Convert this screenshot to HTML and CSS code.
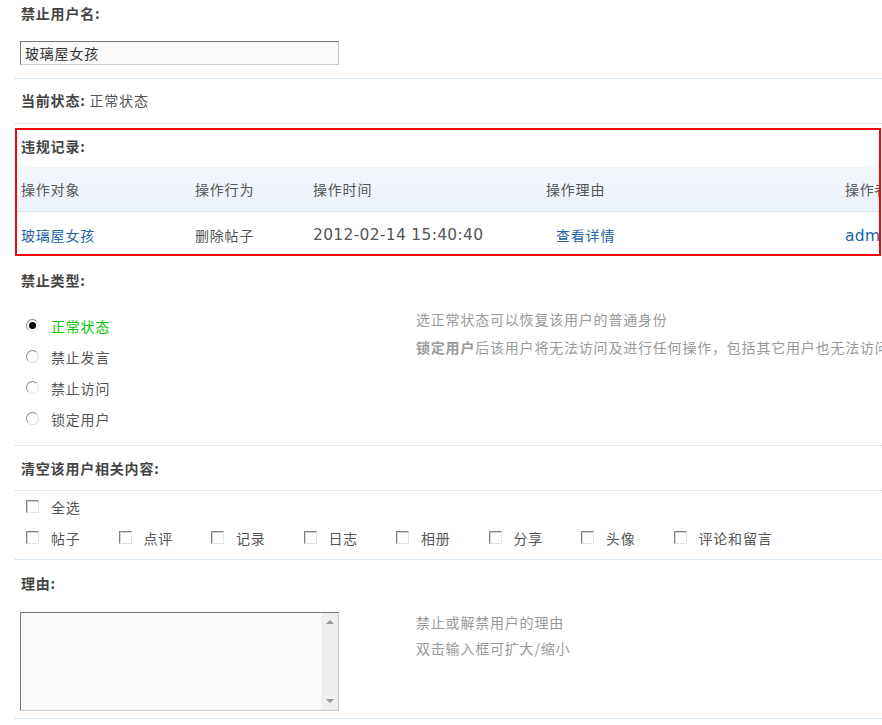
FILE: index.html
```html
<!DOCTYPE html>
<html lang="zh-CN">
<head>
<meta charset="utf-8">
<title>禁止用户</title>
<link rel="stylesheet" href="styles.css">
</head>
<body>
<div class="page">
  <div class="sec sec-name">
    <div class="head">禁止用户名:</div>
    <input class="txt" type="text" value="玻璃屋女孩">
  </div>

  <div class="sec sec-status">
    <span class="label">当前状态:</span> 正常状态
  </div>

  <div class="record">
    <div class="rec-head">违规记录:</div>
    <div class="rec-table">
      <div class="rec-row rec-th">
        <div class="c c1">操作对象</div>
        <div class="c c2">操作行为</div>
        <div class="c c3">操作时间</div>
        <div class="c c4">操作理由</div>
        <div class="c c5">操作者</div>
      </div>
      <div class="rec-row rec-td">
        <div class="c c1"><a href="#" class="lnk">玻璃屋女孩</a></div>
        <div class="c c2">删除帖子</div>
        <div class="c c3 date">2012-02-14 15:40:40</div>
        <div class="c c4 detail"><a href="#" class="lnk">查看详情</a></div>
        <div class="c c5"><a href="#" class="lnk latin">admin</a></div>
      </div>
    </div>
  </div>

  <div class="sec sec-ban">
    <div class="head head-ban">禁止类型:</div>
    <div class="split">
      <div class="radios">
        <label class="opt"><input type="radio" name="ban" class="rd" checked><span class="ok">正常状态</span></label>
        <label class="opt"><input type="radio" name="ban" class="rd"><span>禁止发言</span></label>
        <label class="opt"><input type="radio" name="ban" class="rd"><span>禁止访问</span></label>
        <label class="opt"><input type="radio" name="ban" class="rd"><span>锁定用户</span></label>
      </div>
      <div class="tip tip-ban">
        <p>选正常状态可以恢复该用户的普通身份</p>
        <p><b>锁定用户</b>后该用户将无法访问及进行任何操作，包括其它用户也无法访问该用户的个人空间</p>
      </div>
    </div>
  </div>

  <div class="sec head-clear">
    <div class="head">清空该用户相关内容:</div>
  </div>
  <div class="sec sec-checks">
    <div class="chk-row">
      <label class="chk"><input type="checkbox" class="cb"><span>全选</span></label>
    </div>
    <div class="chk-row">
      <label class="chk"><input type="checkbox" class="cb"><span>帖子</span></label>
      <label class="chk"><input type="checkbox" class="cb"><span>点评</span></label>
      <label class="chk"><input type="checkbox" class="cb"><span>记录</span></label>
      <label class="chk"><input type="checkbox" class="cb"><span>日志</span></label>
      <label class="chk"><input type="checkbox" class="cb"><span>相册</span></label>
      <label class="chk"><input type="checkbox" class="cb"><span>分享</span></label>
      <label class="chk"><input type="checkbox" class="cb"><span>头像</span></label>
      <label class="chk"><input type="checkbox" class="cb"><span>评论和留言</span></label>
    </div>
  </div>

  <div class="sec sec-reason">
    <div class="head head-reason">理由:</div>
    <div class="split">
      <div class="ta">
        <textarea class="ta-input"></textarea>
        <div class="sb">
          <span class="arr up"></span>
          <span class="arr down"></span>
        </div>
      </div>
      <div class="tip tip-reason">
        <p>禁止或解禁用户的理由</p>
        <p>双击输入框可扩大/缩小</p>
      </div>
    </div>
  </div>
</div>
</body>
</html>
```

FILE: styles.css
```css
* { box-sizing: border-box; }
html, body { margin: 0; padding: 0; background: #fff; }
body {
  width: 882px;
  height: 725px;
  overflow: hidden;
  font-family: "Noto Sans CJK SC", "Noto Sans", sans-serif;
  font-size: 14px;
  letter-spacing: 0.8px;
  color: #555;
}
p { margin: 0; }
.page { margin-left: 15px; width: 867px; }

.sec { border-bottom: 1px dotted #b9d9f2; }
.head { font-weight: bold; color: #444; padding-left: 6px; }

/* name */
.sec-name { padding-bottom: 13px; }
.sec-name .head { line-height: 26px; }
.txt {
  display: block;
  margin: 15px 0 0 5px;
  width: 319px;
  height: 24px;
  padding: 0 4px;
  background: #f9f9f9;
  border: 1px solid;
  border-color: #777 #ccc #ccc #777;
  font: inherit;
  letter-spacing: 0.8px;
  color: #333;
  outline: none;
}

/* status */
.sec-status { line-height: 42px; padding: 0 0 2px 6px; }
.sec-status .label { font-weight: bold; color: #444; }

/* record */
.record {
  margin-top: 4px;
  width: 866px;
  border: 2px solid #f00;
  overflow: hidden;
}
.rec-head {
  font-weight: bold;
  color: #444;
  line-height: 32px;
  padding-left: 4px;
  margin-bottom: 5px;
}
.rec-table { width: 940px; }
.rec-row {
  display: grid;
  grid-template-columns: 174px 118px 233px 299px 116px;
  align-items: center;
}
.rec-row .c { padding-left: 4px; white-space: nowrap; }
.rec-th {
  height: 45px;
  background: linear-gradient(#f2f6fb, #ecf3fa);
  border-bottom: 1px dotted #c8dcee;
}
.rec-td { height: 42px; padding-top: 3px; }
.lnk { color: #2463a8; text-decoration: none; }
.date { font-family: "DejaVu Sans", sans-serif; font-size: 15.5px; letter-spacing: 0.3px; }
.latin { font-family: "DejaVu Sans", sans-serif; font-size: 15.5px; letter-spacing: 0.3px; }
.detail { padding-left: 14px !important; }

/* ban type */
.head-ban { line-height: 48px; }
.split { display: grid; grid-template-columns: 401px 1fr; }
.radios { padding: 6px 0 11px 0; display: flex; flex-direction: column; }
.opt { display: flex; align-items: center; height: 31px; padding-left: 11px; }
.rd {
  appearance: none;
  -webkit-appearance: none;
  margin: 0 12px 0 0;
  width: 13px;
  height: 13px;
  border-radius: 50%;
  border: 1px solid;
  border-color: #888 #ddd #ddd #888;
  background: #fff;
  position: relative;
  flex: none;
}
.rd:checked::after {
  content: "";
  position: absolute;
  left: 2px; top: 2px;
  width: 7px; height: 7px;
  border-radius: 50%;
  background: #000;
}
.ok { color: #00c800; }
.tip { color: #999; white-space: nowrap; overflow: hidden; }
.tip-ban { padding-top: 1px; line-height: 28px; }
.tip b { font-weight: bold; }

/* clear */
.head-clear .head { line-height: 44px; }
.sec-checks { padding-bottom: 6px; }
.chk-row { display: flex; height: 31px; }
.chk { display: flex; align-items: center; width: 92.5px; padding-left: 11px; white-space: nowrap; }
.cb {
  appearance: none;
  -webkit-appearance: none;
  margin: 0 12px 0 0;
  width: 13px;
  height: 13px;
  border: 1px solid;
  border-color: #808080 #e2e2e2 #e2e2e2 #808080;
  box-shadow: inset 1px 1px 0 #d4d4d4;
  background: #fff;
  flex: none;
}

/* reason */
.head-reason { line-height: 46px; }
.sec-reason { padding-bottom: 7px; }
.ta {
  margin: 6px 0 0 5px;
  width: 319px;
  height: 99px;
  display: flex;
  border: 1px solid;
  border-color: #777 #ccc #ccc #777;
  background: #f9f9f9;
}
.ta-input {
  flex: 1;
  border: 0;
  background: transparent;
  resize: none;
  outline: none;
  font: inherit;
}
.sb {
  width: 17px;
  background: #efefef;
  border-left: 1px solid #f6f6f6;
  display: flex;
  flex-direction: column;
  justify-content: space-between;
  align-items: center;
  padding: 7px 0 7px;
}
.arr { width: 0; height: 0; border-left: 4px solid transparent; border-right: 4px solid transparent; }
.arr.up { border-bottom: 4px solid #999; }
.arr.down { border-top: 4px solid #999; }
.tip-reason { padding-top: 3px; line-height: 26px; }
```
